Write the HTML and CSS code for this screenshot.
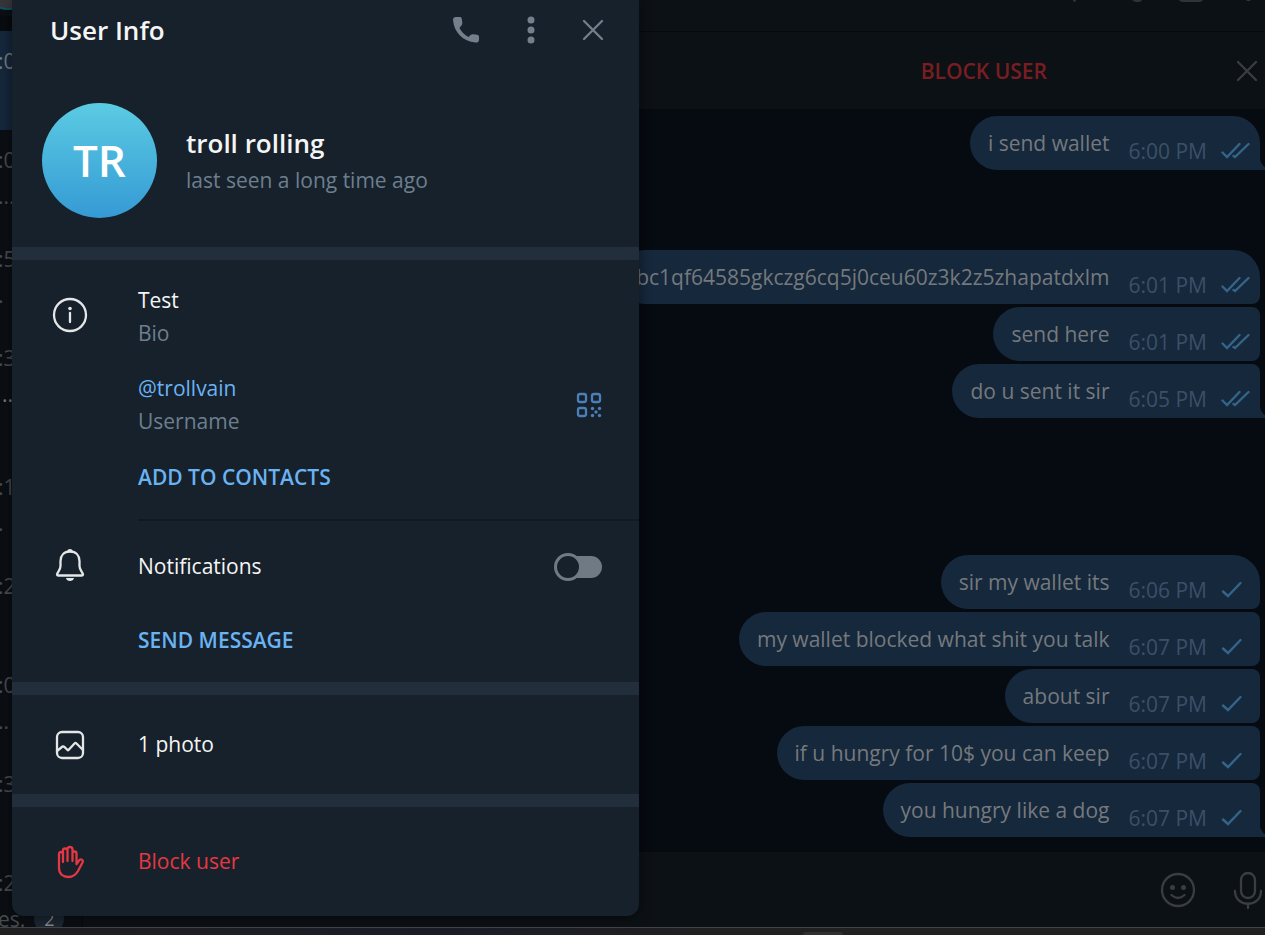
FILE: index.html
```
<!DOCTYPE html>
<html lang="en">
<head>
    <meta charset="UTF-8">
    <meta name="viewport" content="width=device-width, initial-scale=1.0">
    <title>User Info</title>
    <link rel="stylesheet" href="styles.css">
</head>
<body>
    <!-- shared icons -->
    <svg class="sprite" aria-hidden="true">
        <symbol id="tick-one" viewBox="0 0 30 20">
            <path d="M3 11.500 L8 16 L20.500 3"/>
        </symbol>
        <symbol id="tick-two" viewBox="0 0 30 20">
            <path d="M2.500 11.500 L7 16 L19.500 3 M13.500 15 L15 16 L28.500 3"/>
        </symbol>
        <symbol id="cross" viewBox="0 0 22 22">
            <path d="M2 2 L20 20 M20 2 L2 20"/>
        </symbol>
    </svg>

    <div class="app">
        <aside class="chat-list">
            <div class="chat-row chat-row-cut"><span class="story-ring"></span></div>
            <div class="chat-row active"><span class="chat-time">:0</span></div>
            <div class="chat-row"><span class="chat-time">:0</span><span class="chat-preview">...</span></div>
            <div class="chat-row"><span class="chat-time">:5</span><span class="chat-preview">.</span></div>
            <div class="chat-row tall"><span class="chat-time">:3</span><span class="chat-preview bright">..</span></div>
            <div class="chat-row"><span class="chat-time">:1</span><span class="chat-preview">.</span></div>
            <div class="chat-row"><span class="chat-time">:2</span></div>
            <div class="chat-row"><span class="chat-time">:0</span><span class="chat-preview">..</span></div>
            <div class="chat-row"><span class="chat-time">:3</span></div>
            <div class="chat-row"><span class="chat-time">:2</span><span class="chat-preview">es. <b class="badge">2</b></span></div>
        </aside>

        <main class="chat">
            <header class="chat-header">
                <svg width="196" height="4" viewBox="0 0 196 4" aria-hidden="true">
                    <path d="M4 0 h3 v1.500 h-3z M63 0 h10 q-1 2 -5 2 q-3 0 -5 -2z M110 0 h24 q-1 2 -4 2 h-16 q-3 0 -4 -2z M177 0 h5 q-2.500 2.500 -5 0z"/>
                </svg>
            </header>
            <div class="block-bar">
                <button class="block-button">BLOCK USER</button>
                <button class="icon-button" aria-label="Hide"><svg class="line-icon" width="22" height="22"><use href="#cross"/></svg></button>
            </div>

            <div class="messages">
                <div class="group">
                    <div class="bubble"><span>i send wallet</span><time>6:00 PM</time><svg class="ticks"><use href="#tick-two"/></svg></div>
                </div>
                <div class="group after-short">
                    <div class="bubble"><span>bc1qf64585gkczg6cq5j0ceu60z3k2z5zhapatdxlm</span><time>6:01 PM</time><svg class="ticks"><use href="#tick-two"/></svg></div>
                    <div class="bubble"><span>send here</span><time>6:01 PM</time><svg class="ticks"><use href="#tick-two"/></svg></div>
                    <div class="bubble"><span>do u sent it sir</span><time>6:05 PM</time><svg class="ticks"><use href="#tick-two"/></svg></div>
                </div>
                <div class="group after-long">
                    <div class="bubble"><span>sir my wallet its</span><time>6:06 PM</time><svg class="ticks"><use href="#tick-one"/></svg></div>
                    <div class="bubble"><span>my wallet blocked what shit you talk</span><time>6:07 PM</time><svg class="ticks"><use href="#tick-one"/></svg></div>
                    <div class="bubble"><span>about sir</span><time>6:07 PM</time><svg class="ticks"><use href="#tick-one"/></svg></div>
                    <div class="bubble"><span>if u hungry for 10$ you can keep</span><time>6:07 PM</time><svg class="ticks"><use href="#tick-one"/></svg></div>
                    <div class="bubble"><span>you hungry like a dog</span><time>6:07 PM</time><svg class="ticks"><use href="#tick-one"/></svg></div>
                </div>
            </div>

            <footer class="composer">
                <button class="icon-button" aria-label="Emoji">
                    <svg class="line-icon" width="36" height="36" viewBox="0 0 36 36">
                        <circle cx="18" cy="18" r="16"/>
                        <path d="M11.500 23 Q18 29 24.500 23"/>
                        <circle class="dot" cx="12.500" cy="15.500" r="2.500"/>
                        <circle class="dot" cx="23.500" cy="15.500" r="2.500"/>
                    </svg>
                </button>
                <button class="icon-button" aria-label="Voice message">
                    <svg class="line-icon" width="30" height="40" viewBox="0 0 30 40">
                        <rect x="8" y="3" width="14" height="25" rx="7"/>
                        <path d="M2 21 C2 38 28 38 28 21 M15 34 V38"/>
                    </svg>
                </button>
            </footer>
        </main>

        <section class="user-info" role="dialog" aria-labelledby="info-title">
            <header class="info-header">
                <h1 id="info-title">User Info</h1>
                <button class="icon-button" aria-label="Call">
                    <svg class="fill-icon" width="28" height="28" viewBox="0 0 28 28">
                        <path d="M4 1 H7.500 C9 1 9.500 1.500 9.800 3 L10.300 6.500 C10.500 8 10 9 9 10 L7.500 12 C9.500 16 12.500 19 16.500 21 L18.500 19 C19.500 18.200 20.300 18 21.500 18.200 L25 18.700 C26.500 19 27 19.800 27 21 V23.500 C27 26 25.500 26.800 23.500 26.500 C11 25.500 2 16.500 1 4 C1 2 2 1 4 1 Z"/>
                    </svg>
                </button>
                <button class="icon-button" aria-label="More">
                    <svg class="fill-icon" width="8" height="28" viewBox="0 0 8 28">
                        <circle cx="4" cy="4" r="3.500"/><circle cx="4" cy="14" r="3.500"/><circle cx="4" cy="24" r="3.500"/>
                    </svg>
                </button>
                <button class="icon-button" aria-label="Close"><svg class="line-icon" width="22" height="22"><use href="#cross"/></svg></button>
            </header>

            <div class="profile">
                <div class="avatar">TR</div>
                <div>
                    <h2>troll rolling</h2>
                    <p class="muted">last seen a long time ago</p>
                </div>
            </div>

            <div class="info-row details">
                <svg class="row-icon" width="36" height="36" viewBox="0 0 36 36">
                    <circle cx="18" cy="18" r="16"/>
                    <path d="M18 16 V25"/><circle class="dot" cx="18" cy="11.500" r="1.800"/>
                </svg>
                <div class="row-body">
                    <p>Test</p>
                    <p class="muted">Bio</p>
                    <div class="username">
                        <div>
                            <a href="#">@trollvain</a>
                            <p class="muted">Username</p>
                        </div>
                        <button class="icon-button" aria-label="QR code">
                            <svg class="qr-icon" width="26" height="26" viewBox="0 0 26 26">
                                <rect x="2" y="2" width="8" height="8" rx="2"/>
                                <rect x="16" y="2" width="8" height="8" rx="2"/>
                                <rect x="2" y="16" width="8" height="8" rx="2"/>
                                <g class="dot"><circle cx="16.500" cy="16.500" r="1.700"/><circle cx="23.500" cy="16.500" r="1.700"/><circle cx="20" cy="20" r="1.700"/><circle cx="16.500" cy="23.500" r="1.700"/><circle cx="23.500" cy="23.500" r="1.700"/></g>
                            </svg>
                        </button>
                    </div>
                    <button class="text-button">ADD TO CONTACTS</button>
                </div>
            </div>

            <div class="info-row notifications">
                <svg class="row-icon" width="30" height="34" viewBox="0 0 30 34">
                    <path d="M15 3.500 C9 3.500 5.500 7.500 5.500 13 V18 C5.500 22 2.500 24 2 26.500 Q2 27.500 3 27.500 H27 Q28 27.500 28 26.500 C27.500 24 24.500 22 24.500 18 V13 C24.500 7.500 21 3.500 15 3.500 Z"/>
                    <path class="dot" d="M12 4 C12 0 18 0 18 4 Z M11 30 H19 C18.500 34 11.500 34 11 30 Z"/>
                </svg>
                <div class="row-body">
                    <div class="switch-line">
                        <label for="notify">Notifications</label>
                        <input type="checkbox" class="switch" id="notify">
                    </div>
                    <button class="text-button">SEND MESSAGE</button>
                </div>
            </div>

            <div class="info-row single">
                <svg class="row-icon" width="30" height="30" viewBox="0 0 30 30">
                    <rect x="2" y="2" width="26" height="26" rx="5"/>
                    <path d="M2 21 L7.500 16.500 Q8.500 16 9.500 17 L12.500 20 Q13 20.500 13.500 20 L19.500 13.500 Q20.500 12.500 21.500 13.500 L28 20"/>
                </svg>
                <a href="#" class="plain">1 photo</a>
            </div>

            <div class="info-row single last">
                <svg class="row-icon danger" width="28" height="34" viewBox="0 0 28 34">
                    <path d="M6 17 V9 Q6 7 4 7 Q2 7 2 9 V23 C2 29 6 32 11.500 32 C17 32 19 29.500 21 26 L25.500 17.500 Q26.500 15 24.500 14.500 Q23 14 22 15.500 L19.500 19 V8.500 Q19.500 6.500 17.500 6.500 Q15.500 6.500 15.500 8.500 V16 M6 9 V5.500 Q6 3.500 8 3.500 Q10.500 3.500 10.500 5.500 V16 M10.500 5 V4 Q10.500 2 12.800 2 Q15.500 2 15.500 4.500 V10"/>
                </svg>
                <button class="danger-button">Block user</button>
            </div>
        </section>
    </div>
    <div class="taskbar"><span></span></div>
</body>
</html>
```
FILE: styles.css
```
*, *::before, *::after {
    box-sizing: border-box;
}
body {
    display: flex;
    flex-direction: column;
    min-height: 100vh;
    margin: 0;
    background: #060a11;
    color: #f5f5f5;
    font: 21px/33px "Open Sans", "Noto Sans", sans-serif;
    overflow: hidden;
}
h1, h2, p {
    margin: 0;
}
h1, h2 {
    font-size: 26px;
    font-weight: 600;
}
a {
    color: #6ab3f3;
    text-decoration: none;
}
button {
    padding: 0;
    border: 0;
    background: none;
    color: inherit;
    font: inherit;
    cursor: pointer;
}
svg {
    display: block;
    flex: none;
}
.sprite {
    position: absolute;
    width: 0;
    height: 0;
}
.app {
    position: relative;
    display: flex;
    flex: 1;
}
.icon-button {
    flex: none;
    color: #737f8b;
}
.line-icon, .row-icon, .qr-icon {
    fill: none;
    stroke: currentColor;
    stroke-width: 2.3;
    stroke-linecap: round;
    stroke-linejoin: round;
}
.fill-icon, .dot {
    fill: currentColor;
    stroke: none;
}

/* chat list */
.chat-list {
    width: 83px;
    flex: none;
    height: calc(100vh - 8px);
    overflow: hidden;
    background: #0b0f14;
    border-right: 1px solid #070a0d;
    color: #484b4e;
}
.chat-row {
    display: flex;
    flex-direction: column;
    height: 99px;
    padding-top: 12px;
    line-height: 36px;
}
.chat-row.tall {
    height: 129px;
}
.chat-row.active {
    background: #15273b;
    color: #72777c;
}
.chat-row-cut {
    height: 31px;
    padding: 0;
    overflow: hidden;
    border-bottom: 15px solid #080b0f;
}
.story-ring {
    flex: none;
    width: 52px;
    height: 52px;
    margin: -42px 0 0 -18px;
    border: 2px solid #0e5365;
    border-radius: 50%;
    background: #35353a;
}
.chat-time, .chat-preview {
    margin-left: -2px;
}
.chat-preview {
    display: flex;
    align-items: center;
    gap: 9px;
}
.chat-preview.bright {
    color: #777;
    padding-left: 4px;
}
.badge {
    width: 30px;
    height: 30px;
    border-radius: 15px;
    background: #1c2733;
    color: #85888b;
    font-size: 18px;
    font-weight: 400;
    line-height: 30px;
    text-align: center;
}

/* conversation */
.chat {
    display: flex;
    flex: 1;
    flex-direction: column;
    min-width: 0;
    overflow: hidden;
}
.chat-header {
    display: flex;
    justify-content: flex-end;
    height: 32px;
    background: #0c1115;
    border-bottom: 1px solid #07090c;
    fill: #303437;
}
.block-bar {
    display: flex;
    align-items: center;
    justify-content: flex-end;
    gap: 189px;
    height: 77px;
    padding-right: 7px;
    background: #0c1115;
}
.block-bar .icon-button, .composer .icon-button {
    color: #3a3e41;
}
.block-button {
    padding-top: 2px;
    color: #7a1d22;
    font-weight: 600;
}
.messages {
    flex: 1;
    padding: 7px 5px 15px;
}
.group {
    display: flex;
    flex-direction: column;
    align-items: flex-end;
    gap: 3px;
}
.after-short {
    margin-top: 80px;
}
.after-long {
    margin-top: 137px;
}
.bubble {
    position: relative;
    display: flex;
    height: 54px;
    padding: 11px 10px 0 18px;
    border-radius: 27px 8px 8px 27px;
    background: #16283c;
    color: #75797d;
    white-space: nowrap;
}
.bubble:first-child {
    border-top-right-radius: 27px;
}
.bubble:last-child {
    border-bottom-right-radius: 0;
}
.bubble:last-child::after {
    content: "";
    position: absolute;
    left: 100%;
    bottom: 0;
    width: 14px;
    height: 14px;
    background: radial-gradient(circle at 100% 0, transparent 14px, #16283c 15px);
}
.bubble time {
    margin: 8px 13px 0 19px;
    color: #3b5067;
}
.ticks {
    width: 30px;
    height: 20px;
    margin-top: 14px;
    fill: none;
    stroke: #356489;
    stroke-width: 2.4;
    stroke-linecap: round;
}
.composer {
    display: flex;
    align-items: center;
    justify-content: flex-end;
    gap: 37px;
    height: 75px;
    padding-right: 2px;
    background: #0c1115;
}
.taskbar {
    height: 8px;
    background: linear-gradient(90deg, #202021, #1c1c29 35%, #202021 55%);
    border-top: 1px solid #444;
}
.taskbar span {
    display: block;
    width: 40px;
    height: 3px;
    margin: 4px 422px 0 auto;
    border-radius: 4px 4px 0 0;
    background: #303030;
}

/* profile panel lies over the conversation */
.user-info {
    position: absolute;
    top: 0;
    left: 12px;
    width: 627px;
    border-radius: 0 0 12px 12px;
    background: #17212b;
    box-shadow: 0 2px 12px rgba(0, 0, 0, 0.5);
}
.info-header {
    display: flex;
    align-items: center;
    height: 60px;
    padding: 0 35px 0 38px;
    gap: 47px;
}
.info-header h1 {
    flex: 1;
}
.profile {
    display: flex;
    align-items: center;
    gap: 29px;
    height: 200px;
    padding: 14px 0 0 30px;
    border-bottom: 13px solid #232e3c;
}
.profile h2 {
    padding-top: 3px;
}
.profile .muted {
    margin-top: 4px;
}
.avatar {
    width: 115px;
    height: 115px;
    border-radius: 50%;
    background: linear-gradient(#5bcbe3, #359ad4);
    color: #fff;
    font-size: 44px;
    font-weight: 600;
    line-height: 115px;
    text-align: center;
}
.muted {
    color: #6d7f8f;
}
.info-row {
    display: grid;
    grid-template-columns: 114px 1fr;
    padding-left: 12px;
}
.row-icon {
    justify-self: center;
    margin-right: 23px;
    color: #e4e6e8;
}
.row-body {
    padding-right: 37px;
}
.details .row-icon {
    margin-top: 37px;
}
.details .row-body {
    padding-top: 24px;
    height: 261px;
    border-bottom: 2px solid #111921;
}
.username {
    display: flex;
    align-items: center;
    justify-content: space-between;
    margin: 22px 0 23px;
}
.username a {
    display: block;
}
.qr-icon {
    color: #4a7fb8;
}
.text-button {
    color: #6ab3f3;
    font-weight: 600;
}
.notifications {
    border-bottom: 13px solid #232e3c;
    height: 174px;
}
.notifications .row-icon {
    margin-top: 27px;
}
.switch-line {
    display: flex;
    align-items: center;
    justify-content: space-between;
    margin: 29px 0 41px;
}
.switch {
    appearance: none;
    position: relative;
    width: 44px;
    height: 22px;
    margin: 0;
    border-radius: 11px;
    background: #6f7a85;
}
.switch::before {
    content: "";
    position: absolute;
    top: -3px;
    left: -4px;
    width: 28px;
    height: 28px;
    border: 3px solid #6f7a85;
    border-radius: 50%;
    background: #17212b;
}
.single {
    align-items: center;
    height: 112px;
    border-bottom: 13px solid #232e3c;
}
.last {
    height: 109px;
    border: 0;
}
.plain {
    color: inherit;
}
.danger {
    margin-right: 20px;
    color: #e53842;
}
.danger-button {
    color: #e53842;
    text-align: left;
}
```
